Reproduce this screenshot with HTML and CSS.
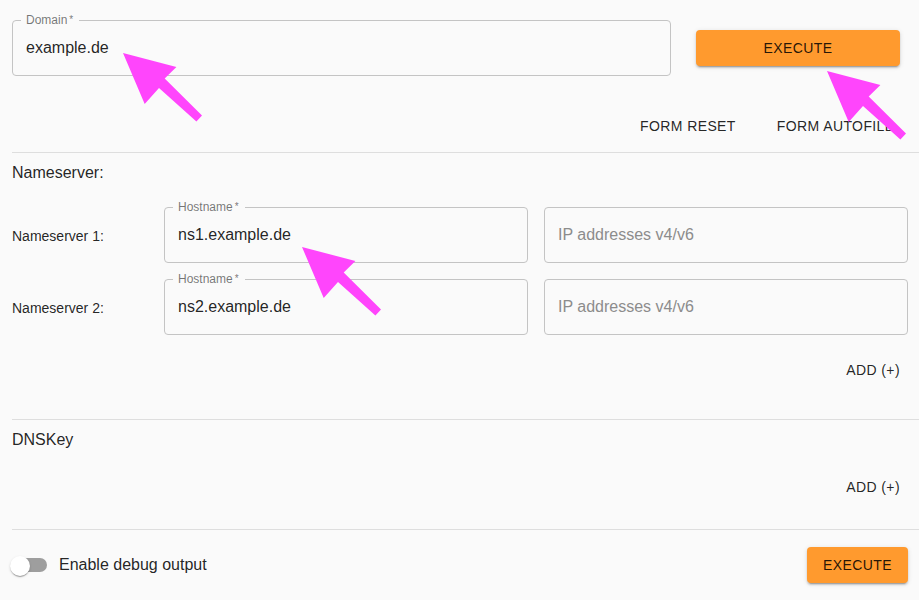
FILE: index.html
```html
<!DOCTYPE html>
<html lang="en">
<head>
<meta charset="utf-8">
<title>Domain check</title>
<link rel="stylesheet" href="styles.css">
</head>
<body>
<main class="page">
  <section class="top">
    <div class="top-row">
      <div class="field field-domain">
        <span class="field-label">Domain<span class="req">&thinsp;*</span></span>
        <span class="field-value">example.de</span>
      </div>
      <div class="top-action">
        <button class="btn btn-contained btn-block" type="button">Execute</button>
      </div>
    </div>
    <div class="form-tools">
      <button class="btn btn-text" type="button">Form reset</button>
      <button class="btn btn-text" type="button">Form autofill</button>
    </div>
  </section>

  <hr class="divider">

  <section class="ns">
    <div class="section-title">Nameserver:</div>
    <div class="ns-grid">
      <div class="ns-label">Nameserver 1:</div>
      <div class="field">
        <span class="field-label">Hostname<span class="req">&thinsp;*</span></span>
        <span class="field-value">ns1.example.de</span>
      </div>
      <div class="field">
        <span class="placeholder">IP addresses v4/v6</span>
      </div>

      <div class="ns-label">Nameserver 2:</div>
      <div class="field">
        <span class="field-label">Hostname<span class="req">&thinsp;*</span></span>
        <span class="field-value">ns2.example.de</span>
      </div>
      <div class="field">
        <span class="placeholder">IP addresses v4/v6</span>
      </div>
    </div>
    <div class="add-row add-row-ns">
      <button class="btn btn-text" type="button">Add (+)</button>
    </div>
  </section>

  <hr class="divider divider-ns">

  <section class="dnskey">
    <div class="section-title">DNSKey</div>
    <div class="add-row">
      <button class="btn btn-text" type="button">Add (+)</button>
    </div>
  </section>

  <hr class="divider divider-key">

  <section class="bottom-row">
    <label class="switch-label">
      <span class="switch">
        <span class="switch-track"></span>
        <span class="switch-thumb"></span>
      </span>
      <span class="switch-text">Enable debug output</span>
    </label>
    <button class="btn btn-contained" type="button">Execute</button>
  </section>

  <svg class="arrow arrow-domain" viewBox="0 0 80 70" aria-hidden="true"><polygon points="0,0 53.4,14 41.7,25.5 79,62.4 73.4,68.4 36,35 21.7,51"/></svg>
  <svg class="arrow arrow-execute" viewBox="0 0 80 70" aria-hidden="true"><polygon points="0,0 53.4,14 41.7,25.5 79,62.4 73.4,68.4 36,35 21.7,51"/></svg>
  <svg class="arrow arrow-ns" viewBox="0 0 80 70" aria-hidden="true"><polygon points="0,0 53.4,14 41.7,25.5 79,62.4 73.4,68.4 36,35 21.7,51"/></svg>
</main>
</body>
</html>
```

FILE: styles.css
```css
* {
  box-sizing: border-box;
}

html,
body {
  margin: 0;
  padding: 0;
}

body {
  background: #fafafa;
  font-family: "Liberation Sans", Arial, Helvetica, sans-serif;
  color: rgba(0, 0, 0, 0.87);
  width: 919px;
  height: 600px;
  overflow: hidden;
}

.page {
  position: relative;
  padding: 20px 11px 0 12px;
}

/* ---------- buttons ---------- */
.btn {
  border: 0;
  margin: 0;
  background: none;
  font-family: inherit;
  font-size: 14px;
  line-height: 24px;
  letter-spacing: 0.4px;
  text-transform: uppercase;
  color: rgba(0, 0, 0, 0.87);
  border-radius: 4px;
  cursor: pointer;
  white-space: nowrap;
}

.btn-text {
  padding: 6px 8px;
}

.btn-contained {
  padding: 6px 16px;
  background: #ff9a2e;
  box-shadow: 0 3px 1px -2px rgba(0, 0, 0, 0.2), 0 2px 2px 0 rgba(0, 0, 0, 0.14), 0 1px 5px 0 rgba(0, 0, 0, 0.12);
}

.btn-block {
  display: block;
  width: 100%;
}

/* ---------- outlined fields ---------- */
.field {
  position: relative;
  height: 56px;
  border: 1px solid #c4c4c4;
  border-radius: 4px;
  padding: 0 13px;
  display: flex;
  align-items: center;
  font-size: 16px;
}

.field-label {
  position: absolute;
  top: -8px;
  left: 8px;
  padding: 0 6px 0 5px;
  background: #fafafa;
  font-size: 12px;
  line-height: 14px;
  color: rgba(0, 0, 0, 0.55);
}

.req {
  font-size: 10px;
  vertical-align: 1px;
}

.field-value {
  color: rgba(0, 0, 0, 0.87);
}

.placeholder {
  color: #8c8c8c;
}

/* ---------- top ---------- */
.top-row {
  display: flex;
  align-items: center;
  gap: 25px;
  margin-right: 8px;
}

.field-domain {
  flex: 0 0 659px;
}

.top-action {
  flex: 1;
}

.form-tools {
  display: flex;
  justify-content: flex-end;
  gap: 25px;
  margin-top: 32px;
  margin-right: 7px;
}

.divider {
  border: 0;
  height: 1px;
  background: #dedede;
  margin: 8px -11px 0 0;
}

/* ---------- nameserver ---------- */
.section-title {
  font-size: 16px;
  line-height: 24px;
  margin-top: 8px;
}

.ns-grid {
  display: grid;
  grid-template-columns: 136px 364px 364px;
  column-gap: 16px;
  row-gap: 16px;
  margin-top: 22px;
  align-items: center;
}

.ns-label {
  font-size: 14px;
  line-height: 20px;
  padding-top: 1px;
}

.add-row {
  display: flex;
  justify-content: flex-end;
  margin-top: 17px;
}

.divider-ns {
  margin-top: 31px;
}

.divider-key {
  margin-top: 24px;
}

/* ---------- bottom ---------- */
.bottom-row {
  display: flex;
  justify-content: space-between;
  align-items: center;
  margin-top: 16px;
}

.switch-label {
  display: flex;
  align-items: center;
  margin-left: -11px;
  cursor: pointer;
}

.switch {
  position: relative;
  flex: none;
  width: 58px;
  height: 38px;
}

.switch-track {
  position: absolute;
  left: 12px;
  top: 12px;
  width: 34px;
  height: 14px;
  border-radius: 7px;
  background: #9e9e9e;
}

.switch-thumb {
  position: absolute;
  left: 9px;
  top: 10px;
  width: 20px;
  height: 20px;
  border-radius: 50%;
  background: #ffffff;
  box-shadow: 0 2px 1px -1px rgba(0, 0, 0, 0.2), 0 1px 1px 0 rgba(0, 0, 0, 0.14), 0 1px 3px 0 rgba(0, 0, 0, 0.12);
}

.switch-text {
  font-size: 16px;
  line-height: 24px;
}

/* ---------- annotation arrows ---------- */
.arrow {
  position: absolute;
  width: 80px;
  height: 70px;
  fill: #ff45fc;
  overflow: visible;
  pointer-events: none;
}

.arrow-domain {
  left: 123px;
  top: 53px;
}

.arrow-execute {
  left: 827px;
  top: 71px;
}

.arrow-ns {
  left: 302px;
  top: 247px;
}
```
